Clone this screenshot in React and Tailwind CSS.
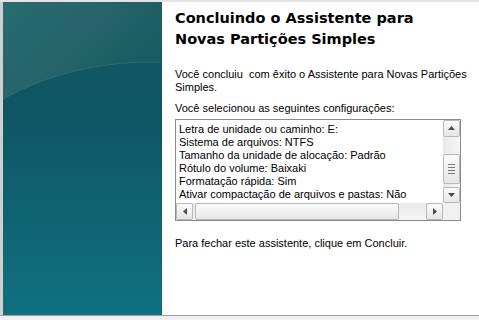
import React from "react"

const linhas = [
  "Letra de unidade ou caminho: E:",
  "Sistema de arquivos: NTFS",
  "Tamanho da unidade de alocação: Padrão",
  "Rótulo do volume: Baixaki",
  "Formatação rápida: Sim",
  "Ativar compactação de arquivos e pastas: Não",
]

function PainelLateral() {
  return (
    <svg width="159" height="313" viewBox="0 0 159 313" className="block">
      <defs>
        <linearGradient id="base" x1="0" y1="0" x2="0" y2="1">
          <stop offset="0" stopColor="#185860" />
          <stop offset="0.35" stopColor="#0e5664" />
          <stop offset="1" stopColor="#10707f" />
        </linearGradient>
        <linearGradient id="topo" x1="0" y1="0" x2="1" y2="0.6">
          <stop offset="0" stopColor="#2a6b70" />
          <stop offset="0.5" stopColor="#24646a" />
          <stop offset="1" stopColor="#195960" />
        </linearGradient>
      </defs>
      <rect width="159" height="313" fill="url(#base)" />
      <path d="M0 0 H159 V60 Q70 58 0 97 Z" fill="url(#topo)" />
      <path d="M0 97 Q70 58 159 60" fill="none" stroke="#36767b" strokeOpacity="0.6" strokeWidth="1" />
    </svg>
  )
}

function Seta({ dir }) {
  const pontos = {
    up: "0,4 3.5,0 7,4",
    down: "0,0 3.5,4 7,0",
    left: "4,0 0,3.5 4,7",
    right: "0,0 4,3.5 0,7",
  }[dir]
  const vertical = dir === "up" || dir === "down"
  return (
    <svg width={vertical ? 7 : 4} height={vertical ? 4 : 7} className="block">
      <polygon points={pontos} fill="#4d4d4d" />
    </svg>
  )
}

function Botao({ children, className = "" }) {
  return (
    <div className={"flex items-center justify-center rounded-[2px] border border-[#b8b8b8] bg-gradient-to-b from-[#fbfbfb] to-[#e6e6e6] " + className}>
      {children}
    </div>
  )
}

export default function App() {
  return (
    <div className="w-[479px] h-[320px] bg-white flex flex-col overflow-hidden" style={{ fontFamily: "'Liberation Sans', Arial, sans-serif" }}>
      <div className="h-[2px] bg-[#e4e4e4]" />
      <div className="flex h-[313px]">
        <div className="w-[3px] bg-[#cfcfcf]" />
        <PainelLateral />
        <div className="flex-1 pl-[13px] pt-[6px] text-black">
          <h1 className="text-[14.5px] leading-[21px] font-bold" style={{ fontFamily: "'DejaVu Sans', Verdana, sans-serif" }}>
            Concluindo o Assistente para
            <br />
            Novas Partições Simples
          </h1>
          <p className="mt-[18px] text-[11px] leading-[13px]">
            Você concluiu&nbsp; com êxito o Assistente para Novas Partições Simples.
          </p>
          <p className="mt-[8px] text-[11px] leading-[13px]">Você selecionou as seguintes configurações:</p>

          <div className="mt-[4px] w-[286px] h-[102px] border border-[#8a8a8a] flex flex-col">
            <div className="flex h-[83px]">
              <div className="flex-1 pl-[3px] pt-[3px] text-[11px] leading-[13px] whitespace-nowrap overflow-hidden">
                {linhas.map((l, i) => (
                  <div key={i}>{l}</div>
                ))}
              </div>
              <div className="w-[17px] flex flex-col bg-gradient-to-r from-[#e8e8e8] to-[#f6f6f6]">
                <Botao className="h-[17px]"><Seta dir="up" /></Botao>
                <div className="flex-1 flex flex-col pt-[17px] pb-[3px]">
                  <Botao className="h-[30px]">
                    <div className="flex flex-col gap-[2px]">
                      <div className="w-[7px] h-px bg-[#7a7a7a]" />
                      <div className="w-[7px] h-px bg-[#7a7a7a]" />
                      <div className="w-[7px] h-px bg-[#7a7a7a]" />
                      <div className="w-[7px] h-px bg-[#7a7a7a]" />
                    </div>
                  </Botao>
                </div>
                <Botao className="h-[17px]"><Seta dir="down" /></Botao>
              </div>
            </div>
            <div className="flex h-[17px]">
              <div className="flex-1 flex bg-gradient-to-b from-[#e8e8e8] to-[#f6f6f6]">
                <Botao className="w-[17px]"><Seta dir="left" /></Botao>
                <div className="flex-1 pl-[2px] pr-[27px]">
                  <Botao className="h-full w-full" />
                </div>
                <Botao className="w-[17px]"><Seta dir="right" /></Botao>
              </div>
              <div className="w-[17px] bg-[#f0f0f0]" />
            </div>
          </div>

          <p className="mt-[16px] text-[11px] leading-[13px]">Para fechar este assistente, clique em Concluir.</p>
        </div>
      </div>
      <div className="h-px bg-[#a0a0a0]" />
      <div className="flex-1 bg-[#f0f0f0]" />
    </div>
  )
}
